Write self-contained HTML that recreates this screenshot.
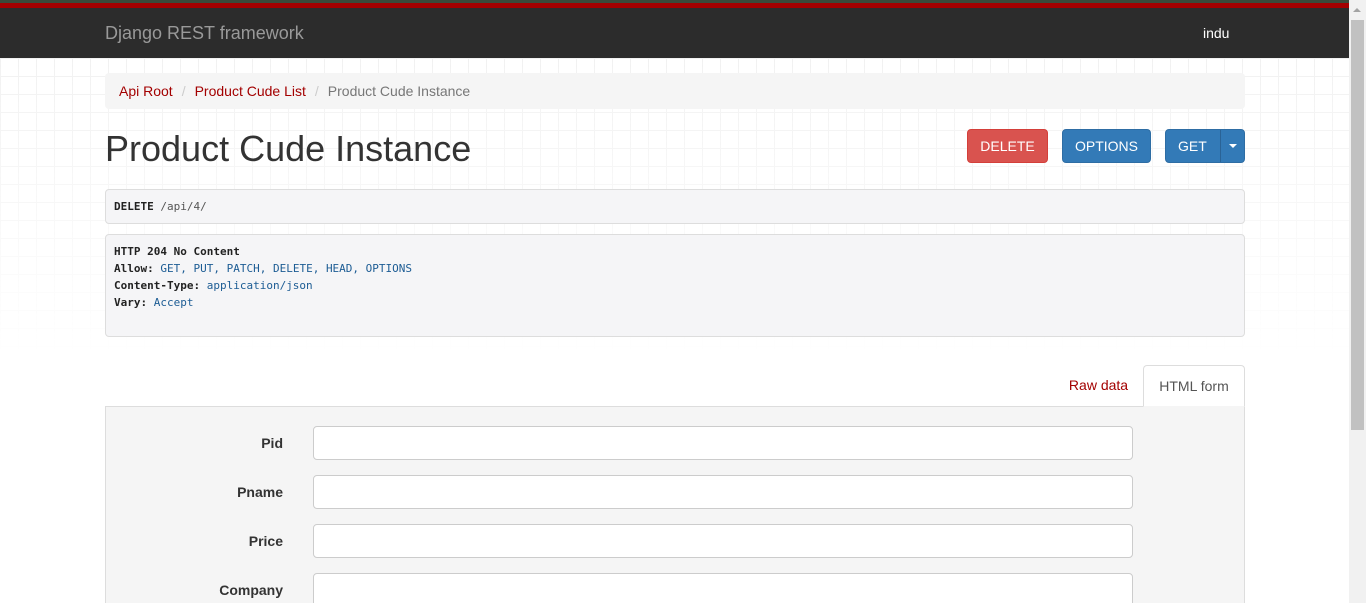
<!DOCTYPE html>
<html><head><meta charset="utf-8"><style>
*{box-sizing:border-box}
html,body{margin:0;width:1366px;height:603px;overflow:hidden}
body{font-family:"Liberation Sans",sans-serif;font-size:14px;color:#333;background:#fff;position:relative}
.grid{position:absolute;left:0;top:58px;width:1349px;height:300px;background-image:linear-gradient(#eee 1px,transparent 1px),linear-gradient(90deg,#eee 1px,transparent 1px);background-size:18px 18px;-webkit-mask-image:linear-gradient(#000,transparent);mask-image:linear-gradient(#000,transparent);opacity:.8}
.topline{position:absolute;left:0;top:0;width:1349px;height:3px;background:#3a4a3a}
.red{position:absolute;left:0;top:3px;width:1349px;height:5px;background:#a30000}
.nav{position:absolute;left:0;top:8px;width:1349px;height:50px;background:#2c2c2c}
.brand{position:absolute;left:105px;top:15px;font-size:18px;color:#999}
.user{position:absolute;left:1203px;top:17px;color:#fff;font-size:14px}
.sb{position:absolute;right:0;top:0;width:17px;height:603px;background:#f1f1f1}
.sb div{position:absolute;left:2px;top:20px;width:13px;height:410px;background:#c1c1c1}
.sb span{position:absolute;left:4px;top:8px;border:4px solid transparent;border-bottom:4px solid #a3a3a3;border-top:0}
.crumb{position:absolute;left:105px;top:73px;width:1140px;height:36px;background:#f5f5f5;border-radius:4px;padding:10px 14px;font-size:14px}
.crumb a{color:#a30000;text-decoration:none}
.crumb .s{color:#ccc;padding:0 9px}
.crumb .c{color:#777}
h1{position:absolute;left:105px;top:128px;margin:0;font-weight:400;font-size:36px;color:#333}
.btn{position:absolute;top:129px;height:34px;border-radius:4px;color:#fff;font-size:14px;line-height:32px;text-align:center;border:1px solid}
pre{position:absolute;left:105px;width:1140px;margin:0;background:#f5f5f7;border:1px solid #ddd;border-radius:4px;font-family:"DejaVu Sans Mono","Liberation Mono",monospace;font-size:11px;line-height:17px;padding:8px 8px;color:#222}
pre b{font-weight:bold;color:#222}
pre i{font-style:normal;color:#1c5c94}
.tabs{position:absolute;top:365px;height:42px}
.form{position:absolute;left:105px;top:406px;width:1140px;height:197px;background:#f5f5f5;border:1px solid #ddd;border-bottom:0}
.lab{position:absolute;width:177px;text-align:right;font-weight:bold;color:#333;font-size:14px}
.inp{position:absolute;left:207px;width:820px;height:34px;background:#fff;border:1px solid #ccc;border-radius:4px}
</style></head><body>
<div class="grid"></div>
<div class="topline"></div><div class="red"></div>
<div class="nav"><div class="brand">Django REST framework</div><div class="user">indu</div></div>
<div class="sb"><span></span><div></div></div>
<div class="crumb"><a>Api Root</a><span class="s">/</span><a>Product Cude List</a><span class="s">/</span><span class="c">Product Cude Instance</span></div>
<h1>Product Cude Instance</h1>
<div class="btn" style="left:967px;width:81px;background:#d9534f;border-color:#d43f3a">DELETE</div>
<div class="btn" style="left:1062px;width:89px;background:#337ab7;border-color:#2e6da4">OPTIONS</div>
<div class="btn" style="left:1165px;width:80px;background:#337ab7;border-color:#2e6da4;text-align:left"><span style="padding-left:12px">GET</span><span style="position:absolute;left:54px;top:0;height:32px;border-left:1px solid #2a6396"></span><span style="position:absolute;left:63px;top:14px;border:4px solid transparent;border-top:4px solid #fff;border-bottom:0"></span></div>
<pre style="top:189px;height:35px"><b>DELETE</b> <i style="color:#555">/api/4/</i></pre>
<pre style="top:234px;height:103px"><b>HTTP 204 No Content</b>
<b>Allow:</b> <i>GET, PUT, PATCH, DELETE, HEAD, OPTIONS</i>
<b>Content-Type:</b> <i>application/json</i>
<b>Vary:</b> <i>Accept</i></pre>
<div class="tabs" style="left:1054px;width:89px;padding-top:12px;color:#a30000;text-align:center">Raw data</div>
<div class="tabs" style="left:1143px;width:102px;border:1px solid #ddd;border-bottom:1px solid #f5f5f5;border-radius:4px 4px 0 0;background:#fff;padding-top:12px;text-align:center;color:#555;z-index:2;height:42px">HTML form</div>
<div class="form">
<div class="lab" style="top:28px">Pid</div><div class="inp" style="top:19px"></div>
<div class="lab" style="top:77px">Pname</div><div class="inp" style="top:68px"></div>
<div class="lab" style="top:126px">Price</div><div class="inp" style="top:117px"></div>
<div class="lab" style="top:175px">Company</div><div class="inp" style="top:166px"></div>
</div>
</body></html>
